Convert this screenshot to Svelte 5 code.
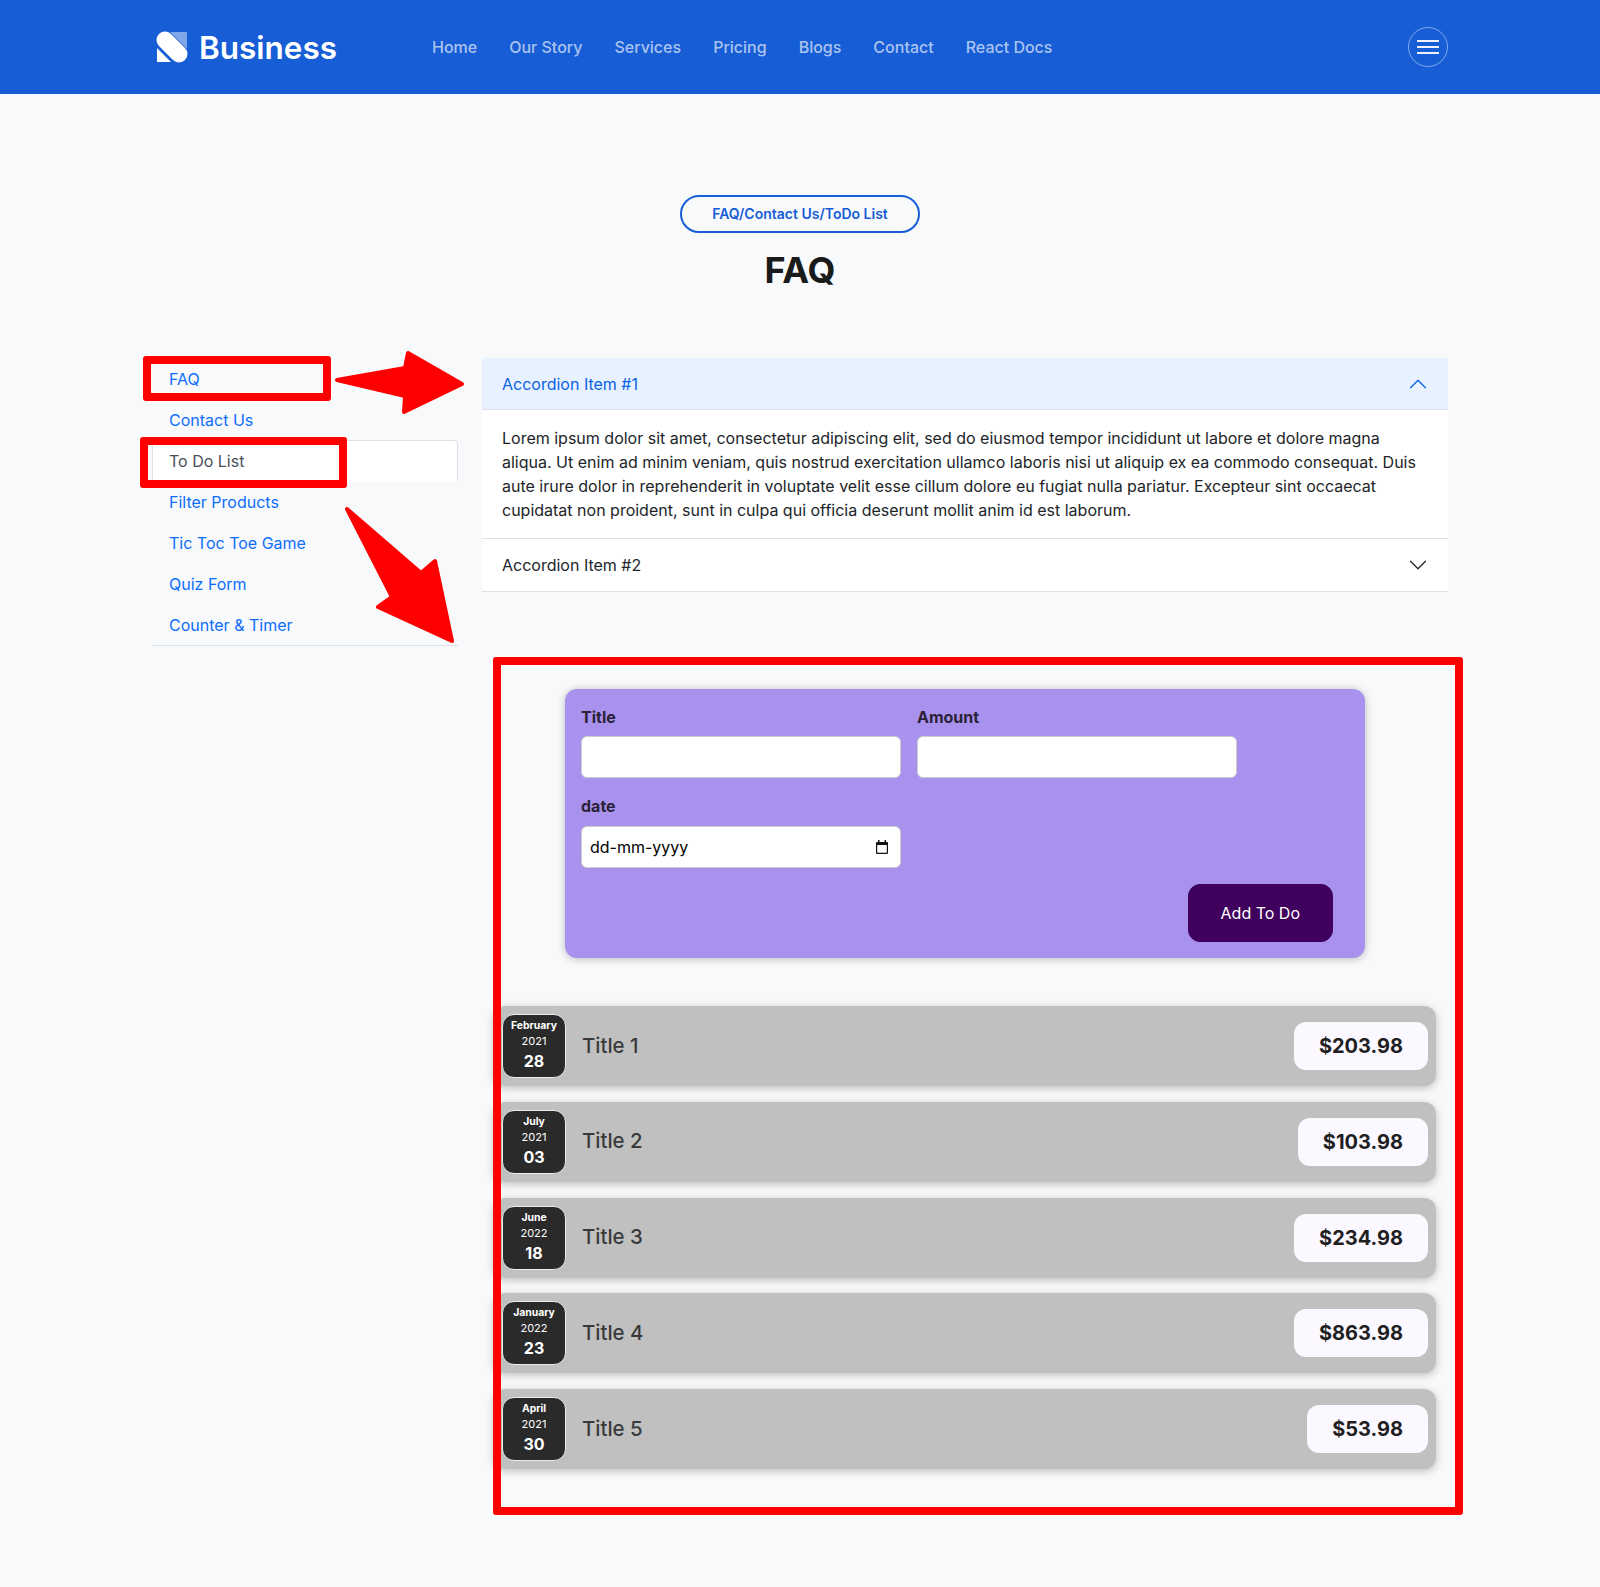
<script>
	const navLinks = ['Home', 'Our Story', 'Services', 'Pricing', 'Blogs', 'Contact', 'React Docs'];
	const tabs = ['FAQ', 'Contact Us', 'To Do List', 'Filter Products', 'Tic Toc Toe Game', 'Quiz Form', 'Counter & Timer'];
	const chevron =
		'M1.646 4.646a.5.5 0 0 1 .708 0L8 10.293l5.646-5.647a.5.5 0 0 1 .708.708l-6 6a.5.5 0 0 1-.708 0l-6-6a.5.5 0 0 1 0-.708z';

	const expenses = [
		{ month: 'February', year: 2021, day: '28', title: 'Title 1', price: '$203.98' },
		{ month: 'July', year: 2021, day: '03', title: 'Title 2', price: '$103.98' },
		{ month: 'June', year: 2022, day: '18', title: 'Title 3', price: '$234.98' },
		{ month: 'January', year: 2022, day: '23', title: 'Title 4', price: '$863.98' },
		{ month: 'April', year: 2021, day: '30', title: 'Title 5', price: '$53.98' }
	];
</script>

<div class="page">
	<header class="topbar">
		<div class="topbar-inner">
			<a class="brand" href="#top">
				<svg width="32" height="32" viewBox="0 0 32 32">
					<path d="M14 1h17v17z" fill="#fff" fill-opacity="0.45" />
					<path d="M1 17l14 14H1z" fill="#fff" />
					<line x1="9" y1="9" x2="23" y2="23" stroke="#fff" stroke-width="17" stroke-linecap="round" />
				</svg>
				<span>Business</span>
			</a>
			<nav class="mainnav">
				{#each navLinks as link}
					<a href="#top">{link}</a>
				{/each}
			</nav>
			<button class="burger" aria-label="Menu">
				<span></span>
				<span></span>
				<span></span>
			</button>
		</div>
	</header>

	<main class="content">
		<div class="heading">
			<span class="pill">FAQ/Contact Us/ToDo List</span>
			<h1>FAQ</h1>
		</div>

		<div class="columns">
			<ul class="tabs">
				{#each tabs as tab, i}
					<li><a href="#top" class:active={i === 2}>{tab}</a></li>
				{/each}
			</ul>

			<div class="right">
				<div class="accordion">
					<div class="acc-item">
						<div class="acc-head open">
							<span>Accordion Item #1</span>
							<svg class="flip" width="20" height="20" viewBox="0 0 16 16" fill="#0c63e4">
								<path fill-rule="evenodd" d={chevron} />
							</svg>
						</div>
						<div class="acc-body">
							Lorem ipsum dolor sit amet, consectetur adipiscing elit, sed do eiusmod tempor incididunt ut labore et dolore magna aliqua. Ut enim ad minim veniam, quis nostrud exercitation ullamco laboris nisi ut aliquip ex ea commodo consequat. Duis aute irure dolor in reprehenderit in voluptate velit esse cillum dolore eu fugiat nulla pariatur. Excepteur sint occaecat cupidatat non proident, sunt in culpa qui officia deserunt mollit anim id est laborum.
						</div>
					</div>
					<div class="acc-item">
						<div class="acc-head">
							<span>Accordion Item #2</span>
							<svg width="20" height="20" viewBox="0 0 16 16" fill="#212529">
								<path fill-rule="evenodd" d={chevron} />
							</svg>
						</div>
					</div>
				</div>

				<form class="todo-form" onsubmit={(e) => e.preventDefault()}>
					<div class="controls">
						<div class="control">
							<label for="title">Title</label>
							<input id="title" type="text" />
						</div>
						<div class="control">
							<label for="amount">Amount</label>
							<input id="amount" type="text" />
						</div>
						<div class="control">
							<label class="date-label" for="date">date</label>
							<div class="date-field">
								<input id="date" type="text" value="dd-mm-yyyy" />
								<svg width="16" height="16" viewBox="0 0 16 16">
									<path d="M4 1h1.5v2h5V1H12v2h1q1 0 1 1v10q0 1-1 1H3q-1 0-1-1V4q0-1 1-1h1zM3.2 6v7.8h9.6V6z" fill="#111" fill-rule="evenodd" />
								</svg>
							</div>
						</div>
					</div>
					<div class="actions">
						<button type="submit">Add To Do</button>
					</div>
				</form>

				<ul class="expenses">
					{#each expenses as item}
						<li class="expense">
							<div class="date-box">
								<div class="month">{item.month}</div>
								<div class="year">{item.year}</div>
								<div class="day">{item.day}</div>
							</div>
							<h2>{item.title}</h2>
							<div class="price">{item.price}</div>
						</li>
					{/each}
				</ul>
			</div>
		</div>
	</main>

	<!-- red markup drawn on top of the screenshot -->
	<div class="mark mark-faq"></div>
	<div class="mark mark-todo"></div>
	<div class="mark mark-panel"></div>
	<svg class="arrows" width="1600" height="700" viewBox="0 0 1600 700">
		<polygon points="337,380 405,368 408,353 462,384 404,412 405,396" />
		<polygon points="347,509 421,573 435,561 452,641 378,607 392,597" />
	</svg>
</div>

<style>
	:global(body) {
		background: #f8f9fb;
		font-family: Inter, 'Noto Sans', sans-serif;
		color: #212529;
	}

	.page {
		position: relative;
		min-height: 1587px;
	}

	.topbar {
		background: #165dd6;
		height: 94px;
	}

	.topbar-inner {
		width: 1296px;
		height: 100%;
		margin: 0 auto;
		display: flex;
		align-items: center;
	}

	.brand {
		display: flex;
		align-items: center;
		gap: 11px;
		margin-left: 4px;
		width: 276px;
		color: #fff;
		font-size: 31.5px;
		line-height: 38px;
		font-weight: 600;
		text-decoration: none;
	}

	.brand span {
		margin-top: 2px;
	}

	.mainnav {
		display: flex;
		gap: 32px;
		flex: 1;
	}

	.mainnav a {
		color: rgba(255, 255, 255, 0.65);
		font-size: 16px;
		font-weight: 500;
		text-decoration: none;
	}

	.burger {
		width: 40px;
		height: 40px;
		padding: 0;
		border: 1px solid rgba(255, 255, 255, 0.45);
		border-radius: 50%;
		background: none;
		display: flex;
		flex-direction: column;
		align-items: center;
		justify-content: center;
		gap: 4px;
	}

	.burger span {
		width: 22px;
		height: 2px;
		background: #f1f1fb;
	}

	.content {
		width: 1296px;
		margin: 0 auto;
	}

	.heading {
		padding-top: 101px;
		margin-bottom: 66px;
		display: flex;
		flex-direction: column;
		align-items: center;
	}

	.pill {
		display: flex;
		align-items: center;
		justify-content: center;
		box-sizing: border-box;
		width: 240px;
		height: 38px;
		padding-bottom: 2px;
		border: 2px solid #165dd6;
		border-radius: 19px;
		color: #165dd6;
		font-size: 14px;
		font-weight: 600;
	}

	h1 {
		margin: 16px 0 0;
		font-size: 36px;
		line-height: 43px;
		font-weight: 700;
		color: #1a1a1a;
	}

	.columns {
		display: grid;
		grid-template-columns: 306px 966px;
		gap: 24px;
		align-items: start;
	}

	.tabs {
		list-style: none;
		margin: 0;
		padding: 0;
		border-bottom: 1px solid #dee2e6;
	}

	.tabs li {
		margin-bottom: -1px;
	}

	.tabs a {
		display: block;
		padding: 8px 16px;
		border: 1px solid transparent;
		border-radius: 4px 4px 0 0;
		color: #0d6efd;
		font-size: 16px;
		line-height: 24px;
		text-decoration: none;
	}

	.tabs a.active {
		color: #495057;
		background: #fff;
		border-color: #dee2e6 #dee2e6 #fff;
	}

	.accordion {
		background: #fff;
	}

	.acc-item {
		border-bottom: 1px solid #dee2e6;
	}

	.acc-head {
		display: flex;
		align-items: center;
		justify-content: space-between;
		padding: 14px 20px;
		font-size: 16px;
		line-height: 24px;
	}

	.acc-head.open {
		background: #e7f1ff;
		color: #0c63e4;
		box-shadow: inset 0 -1px 0 #dee2e6;
	}

	.flip {
		transform: rotate(180deg);
	}

	.acc-body {
		padding: 16px 20px;
		font-size: 16px;
		line-height: 24px;
	}

	.todo-form {
		box-sizing: border-box;
		width: 800px;
		margin: 97px auto 0;
		padding: 16px;
		background: #a892ee;
		border-radius: 12px;
		box-shadow: 0 1px 8px rgba(0, 0, 0, 0.25);
	}

	.controls {
		display: flex;
		flex-wrap: wrap;
		gap: 16px;
	}

	.control label {
		display: block;
		margin-bottom: 7px;
		font-size: 16px;
		line-height: 24px;
		font-weight: 700;
		color: #2b2138;
	}

	.control .date-label {
		margin-bottom: 8px;
	}

	.control input {
		box-sizing: border-box;
		width: 320px;
		height: 42px;
		padding: 8px;
		border: 1px solid #ccc;
		border-radius: 6px;
		background: #fff;
		font: inherit;
		font-size: 16px;
		color: #000;
		display: block;
	}

	.date-field {
		box-sizing: border-box;
		width: 320px;
		height: 42px;
		padding: 0 10px 0 8px;
		display: flex;
		align-items: center;
		justify-content: space-between;
		border: 1px solid #ccc;
		border-radius: 6px;
		background: #fff;
	}

	.control .date-field input {
		width: 200px;
		height: 30px;
		padding: 0;
		border: none;
		border-radius: 0;
	}

	.actions {
		display: flex;
		justify-content: flex-end;
		margin-top: 16px;
		padding-right: 16px;
	}

	.actions button {
		height: 58px;
		padding: 0 32px;
		border: 1px solid #40005d;
		border-radius: 12px;
		background: #40005d;
		color: #fff;
		font: inherit;
		font-size: 16px;
	}

	.expenses {
		list-style: none;
		margin: 48px 12px 0 12px;
		padding: 0;
	}

	.expense {
		display: flex;
		align-items: center;
		height: 80px;
		box-sizing: border-box;
		padding: 8px;
		margin-bottom: 15.75px;
		background: #c0c0c0;
		border-radius: 12px;
		box-shadow: 0 2px 8px rgba(0, 0, 0, 0.25);
	}

	.date-box {
		box-sizing: border-box;
		width: 64px;
		height: 64px;
		padding-bottom: 2px;
		display: flex;
		flex-direction: column;
		align-items: center;
		justify-content: center;
		background: #2a2a2a;
		border: 1px solid #ececec;
		border-radius: 12px;
		color: #fff;
	}

	.month {
		margin-bottom: -1px;
		font-size: 10.4px;
		line-height: 16px;
		font-weight: 700;
	}

	.year {
		font-size: 11px;
		line-height: 16px;
	}

	.day {
		margin-top: 1px;
		font-size: 16px;
		line-height: 22px;
		font-weight: 700;
	}

	h2 {
		flex: 1;
		margin: 0 0 2px 16px;
		font-size: 20.4px;
		font-weight: 500;
		color: #3a3a3a;
	}

	.price {
		padding: 12px 25px;
		background: #fcf8ff;
		border-radius: 12px;
		font-size: 20px;
		line-height: 24px;
		font-weight: 700;
		color: #1f1f1f;
	}

	.mark {
		position: absolute;
		box-sizing: border-box;
		border: 8px solid #f00;
		border-radius: 3px;
	}

	.mark-faq {
		left: 143px;
		top: 356px;
		width: 188px;
		height: 45px;
	}

	.mark-todo {
		left: 140px;
		top: 437px;
		width: 207px;
		height: 51px;
	}

	.mark-panel {
		left: 493px;
		top: 657px;
		width: 970px;
		height: 858px;
	}

	.arrows {
		position: absolute;
		left: 0;
		top: 0;
		pointer-events: none;
	}

	.arrows polygon {
		fill: #f00;
		stroke: #f00;
		stroke-width: 4;
		stroke-linejoin: round;
	}
</style>
